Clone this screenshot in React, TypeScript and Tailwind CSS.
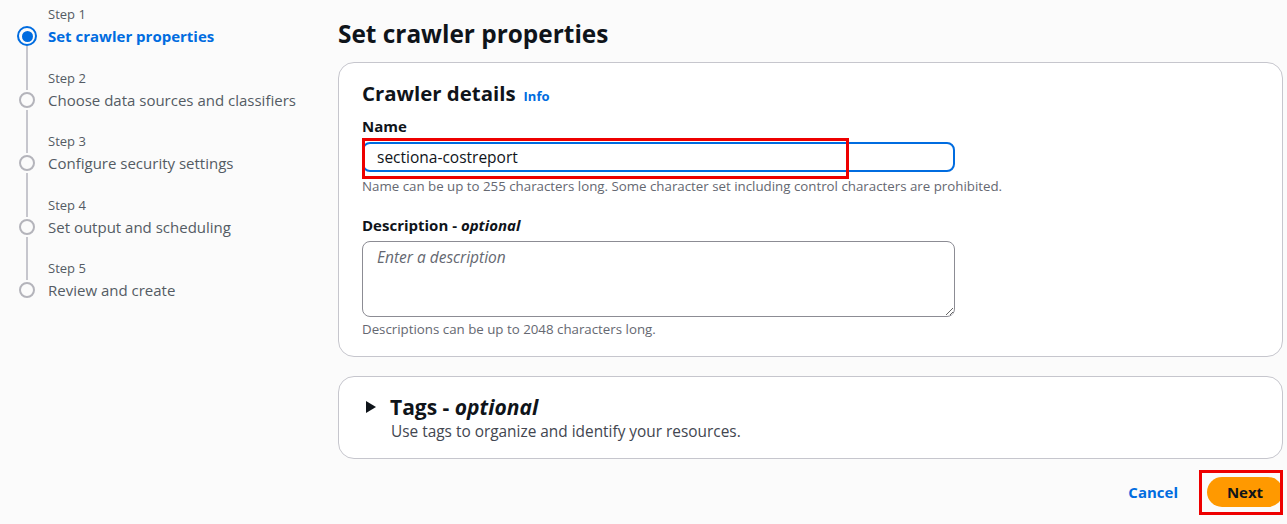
import { useState } from "react";

const steps = [
  { label: "Step 1", title: "Set crawler properties", active: true },
  { label: "Step 2", title: "Choose data sources and classifiers" },
  { label: "Step 3", title: "Configure security settings" },
  { label: "Step 4", title: "Set output and scheduling" },
  { label: "Step 5", title: "Review and create" },
];

function StepNav() {
  return (
    <nav className="w-[338px] shrink-0 pl-[17px] pt-[4px]">
      {steps.map((step, i) => (
        <div key={step.label} className="flex">
          <div className="mr-[11px] flex w-[20px] flex-col items-center">
            <div className="h-[22px] w-[2px]" style={{ background: i === 0 ? "transparent" : "#c6c6cd" }} />
            {step.active ? (
              <div className="flex h-[20px] w-[20px] items-center justify-center rounded-full border-[2.5px] border-[#006ce0]">
                <div className="h-[11px] w-[11px] rounded-full bg-[#006ce0]" />
              </div>
            ) : (
              <div className="my-[2px] h-[16px] w-[16px] rounded-full border-[2px] border-[#b4b4bb]" />
            )}
            <div className="w-[2px] flex-1" style={{ background: i === steps.length - 1 ? "transparent" : "#c6c6cd" }} />
          </div>
          <div className="pb-[19.5px]">
            <div className="h-[20px] text-[13px] leading-[20px] text-[#545b64]">{step.label}</div>
            <div
              className={`text-[15px] leading-[24px] ${step.active ? "font-bold text-[#006ce0]" : "text-[#545b64]"}`}
            >
              {step.title}
            </div>
          </div>
        </div>
      ))}
    </nav>
  );
}

export default function App() {
  const [name, setName] = useState("sectiona-costreport");

  return (
    <div
      className="min-h-[524px] w-[1287px] bg-[#fbfbfb] text-[#0f141a]"
      style={{ fontFamily: '"Open Sans", "Noto Sans", Arial, sans-serif' }}
    >
      <div className="flex">
        <StepNav />
        <main className="w-[945px] pt-[18px]">
          <h1 className="mb-[12px] text-[24.4px] font-bold leading-[32px]">Set crawler properties</h1>

          <section className="rounded-[16px] border border-[#c6c6cd] bg-white px-[23px] pb-[19px] pt-[15px]">
            <div className="flex items-baseline gap-[8px]">
              <h2 className="text-[20.4px] font-bold leading-[30px]">Crawler details</h2>
              <a className="text-[13px] font-bold text-[#006ce0]">Info</a>
            </div>

            <label className="mt-[7px] block text-[15px] font-bold leading-[22px]">Name</label>
            <div className="relative mt-[5px]">
              <input
                value={name}
                onChange={(e) => setName(e.target.value)}
                className="h-[30px] w-[593px] rounded-[8px] border-[2px] border-[#006ce0] bg-white px-[13px] text-[15.5px] text-[#0f141a] outline-none"
              />
              <div className="pointer-events-none absolute left-0 top-[-4px] h-[41px] w-[487px] border-[3px] border-[#ee0000]" />
            </div>
            <p className="mt-[6px] text-[13.3px] leading-[16px] text-[#656871]">
              Name can be up to 255 characters long. Some character set including control characters are prohibited.
            </p>

            <label className="mt-[20px] block text-[15px] font-bold leading-[22px]">
              Description - <i>optional</i>
            </label>
            <textarea
              placeholder="Enter a description"
              className="mt-[5px] block h-[76px] w-[593px] resize-y rounded-[8px] border border-[#8c8c94] bg-white px-[14px] py-[4px] text-[15.5px] leading-[22px] placeholder:italic placeholder:text-[#656871] outline-none"
            />
            <p className="mt-[4px] text-[13.3px] leading-[16px] text-[#656871]">
              Descriptions can be up to 2048 characters long.
            </p>
          </section>

          <section className="mt-[19px] rounded-[16px] border border-[#c6c6cd] bg-white pb-[16px] pl-[24px] pt-[17px]">
            <div className="flex items-center">
              <svg width="12" height="14" viewBox="0 0 12 14" className="ml-[2px] mr-[13px]">
                <path d="M1 1 L11 7 L1 13 Z" fill="#0f141a" />
              </svg>
              <h2 className="text-[21px] font-bold leading-[26px]">
                Tags - <i>optional</i>
              </h2>
            </div>
            <p className="ml-[28px] mt-[2px] text-[15.4px] leading-[20px] text-[#424650]">
              Use tags to organize and identify your resources.
            </p>
          </section>

          <div className="mt-[18px] flex items-center justify-end gap-[29px]">
            <button className="text-[15px] font-bold text-[#006ce0]">Cancel</button>
            <div className="relative">
              <button className="h-[30px] w-[76px] rounded-full bg-[#ff9900] text-[15px] font-bold text-[#0f141a]">
                Next
              </button>
              <div className="pointer-events-none absolute left-[-8px] top-[-7px] h-[45px] w-[84px] border-[3px] border-[#ee0000]" />
            </div>
          </div>
        </main>
      </div>
    </div>
  );
}
